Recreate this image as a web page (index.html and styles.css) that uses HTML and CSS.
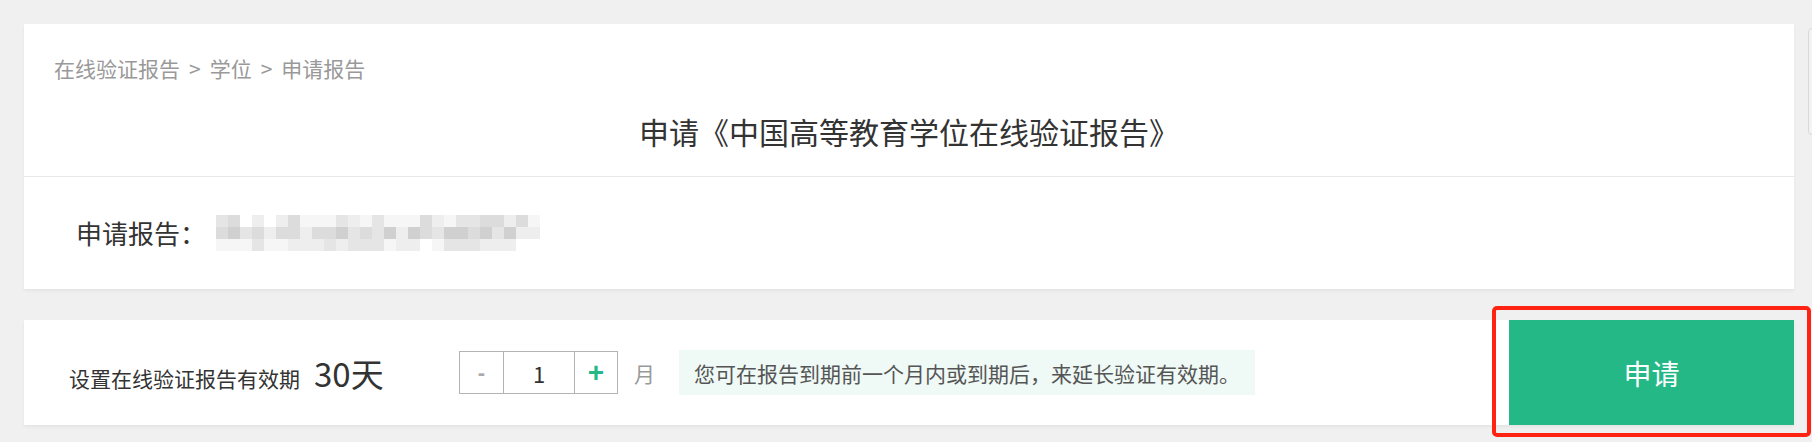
FILE: index.html
```html
<!DOCTYPE html>
<html lang="zh-CN">
<head>
<meta charset="utf-8">
<title>申请报告</title>
<link rel="stylesheet" href="styles.css">
</head>
<body>
<div class="page">
  <section class="card card-main">
    <div class="head">
      <div class="crumb">在线验证报告<span class="sep">&gt;</span>学位<span class="sep">&gt;</span>申请报告</div>
      <h1 class="title">申请《中国高等教育学位在线验证报告》</h1>
    </div>
    <div class="report-row">
      <span class="report-label">申请报告：</span>
      <div class="mosaic">
        <span class="c"></span><span class="d"></span><span class="w"></span><span class="b"></span><span class="w"></span><span class="b"></span><span class="d"></span><span class="a"></span><span class="a"></span><span class="a"></span><span class="c"></span><span class="b"></span><span class="a"></span><span class="c"></span><span class="a"></span><span class="a"></span><span class="a"></span><span class="d"></span><span class="b"></span><span class="a"></span><span class="c"></span><span class="c"></span><span class="d"></span><span class="d"></span><span class="b"></span><span class="d"></span><span class="a"></span>
        <span class="d"></span><span class="e"></span><span class="c"></span><span class="d"></span><span class="b"></span><span class="d"></span><span class="d"></span><span class="b"></span><span class="d"></span><span class="d"></span><span class="e"></span><span class="c"></span><span class="d"></span><span class="c"></span><span class="e"></span><span class="b"></span><span class="e"></span><span class="d"></span><span class="c"></span><span class="e"></span><span class="e"></span><span class="d"></span><span class="e"></span><span class="c"></span><span class="e"></span><span class="b"></span><span class="b"></span>
        <span class="a"></span><span class="a"></span><span class="a"></span><span class="c"></span><span class="a"></span><span class="a"></span><span class="b"></span><span class="b"></span><span class="b"></span><span class="c"></span><span class="b"></span><span class="c"></span><span class="c"></span><span class="c"></span><span class="a"></span><span class="b"></span><span class="b"></span><span class="w"></span><span class="a"></span><span class="c"></span><span class="c"></span><span class="c"></span><span class="b"></span><span class="b"></span><span class="b"></span><span class="w"></span><span class="w"></span>
      </div>
    </div>
  </section>

  <section class="card card-apply">
    <div class="period">
      <span class="period-label">设置在线验证报告有效期</span>
      <span class="period-days">30天</span>
    </div>
    <div class="stepper">
      <button class="step step-minus" type="button">-</button>
      <div class="step-value">1</div>
      <button class="step step-plus" type="button">+</button>
    </div>
    <span class="unit">月</span>
    <div class="tip">您可在报告到期前一个月内或到期后，来延长验证有效期。</div>
    <button class="apply-btn" type="button">申请</button>
  </section>

  <div class="highlight"></div>
  <div class="side-tab"></div>
</div>
</body>
</html>
```

FILE: styles.css
```css
html, body {
  margin: 0;
  padding: 0;
  background: #f0f0f0;
  overflow: hidden;
}

body {
  font-family: "Microsoft YaHei", "Noto Sans CJK SC", sans-serif;
  color: #333;
}

.page {
  position: relative;
  padding: 24px 18px 0 24px;
  height: 418px;
  overflow: hidden;
}

.card {
  background: #fff;
  box-shadow: 0 2px 3px rgba(0, 0, 0, 0.05);
}

/* ---------- card 1 ---------- */
.head {
  padding: 29px 30px 25px;
  border-bottom: 1px solid #e8e8e8;
}

.crumb {
  font-size: 21px;
  line-height: 30px;
  color: #999;
}

.crumb .sep {
  padding: 0 9px;
}

.title {
  margin: 28px 0 0;
  font-size: 30px;
  line-height: 40px;
  font-weight: normal;
  text-align: center;
  color: #333;
}

.report-row {
  display: flex;
  align-items: center;
  height: 112px;
  padding-left: 52px;
}

.report-label {
  font-size: 26px;
  line-height: 36px;
  color: #333;
}

.mosaic {
  margin-left: 10px;
  display: grid;
  grid-template-columns: repeat(27, 12px);
  grid-auto-rows: 12px;
}

.mosaic .w { background: #fff; }
.mosaic .a { background: #f6f6f6; }
.mosaic .b { background: #eeeeee; }
.mosaic .c { background: #e5e5e5; }
.mosaic .d { background: #dcdcdc; }
.mosaic .e { background: #d0d0d0; }

/* ---------- card 2 ---------- */
.card-apply {
  margin-top: 31px;
  height: 105px;
  display: flex;
  align-items: center;
  padding-left: 45px;
}

.period {
  width: 390px;
  flex-shrink: 0;
  display: flex;
  align-items: baseline;
}

.period-label {
  font-size: 21px;
  line-height: 30px;
  color: #333;
}

.period-days {
  margin-left: 14px;
  font-size: 33px;
  line-height: 40px;
  color: #333;
}

.stepper {
  display: flex;
  height: 43px;
  box-sizing: border-box;
  border: 1px solid #b3b3b3;
}

.step {
  padding: 0;
  margin: 0;
  border: none;
  background: #fff;
  font-family: "Liberation Sans", sans-serif;
  font-weight: bold;
  cursor: pointer;
}

.step-minus {
  width: 44px;
  border-right: 1px solid #b3b3b3;
  font-size: 22px;
  color: #aaa;
}

.step-value {
  width: 71px;
  box-sizing: border-box;
  border-right: 1px solid #b3b3b3;
  display: flex;
  align-items: center;
  justify-content: center;
  font-size: 22px;
  color: #333;
}

.step-plus {
  width: 42px;
  font-size: 28px;
  color: #23b886;
}

.unit {
  margin-left: 16px;
  font-size: 21px;
  color: #999;
}

.tip {
  margin-left: 24px;
  width: 576px;
  height: 45px;
  box-sizing: border-box;
  padding: 0 15px;
  display: flex;
  align-items: center;
  background: #eff9f5;
  font-size: 21px;
  color: #555;
  white-space: nowrap;
}

.apply-btn {
  margin-left: auto;
  align-self: stretch;
  width: 285px;
  border: none;
  background: #24b887;
  color: #fff;
  font-family: "Microsoft YaHei", "Noto Sans CJK SC", sans-serif;
  font-size: 28px;
  cursor: pointer;
}

/* ---------- overlays ---------- */
.highlight {
  position: absolute;
  left: 1492px;
  top: 306px;
  width: 319px;
  height: 131px;
  box-sizing: border-box;
  border: 4px solid #ff2314;
  border-radius: 5px;
  pointer-events: none;
}

.side-tab {
  position: absolute;
  left: 1808px;
  top: 28px;
  width: 20px;
  height: 107px;
  box-sizing: border-box;
  border: 1px solid #d8d8d8;
  border-radius: 4px;
  background: #f3f3f3;
}
```
